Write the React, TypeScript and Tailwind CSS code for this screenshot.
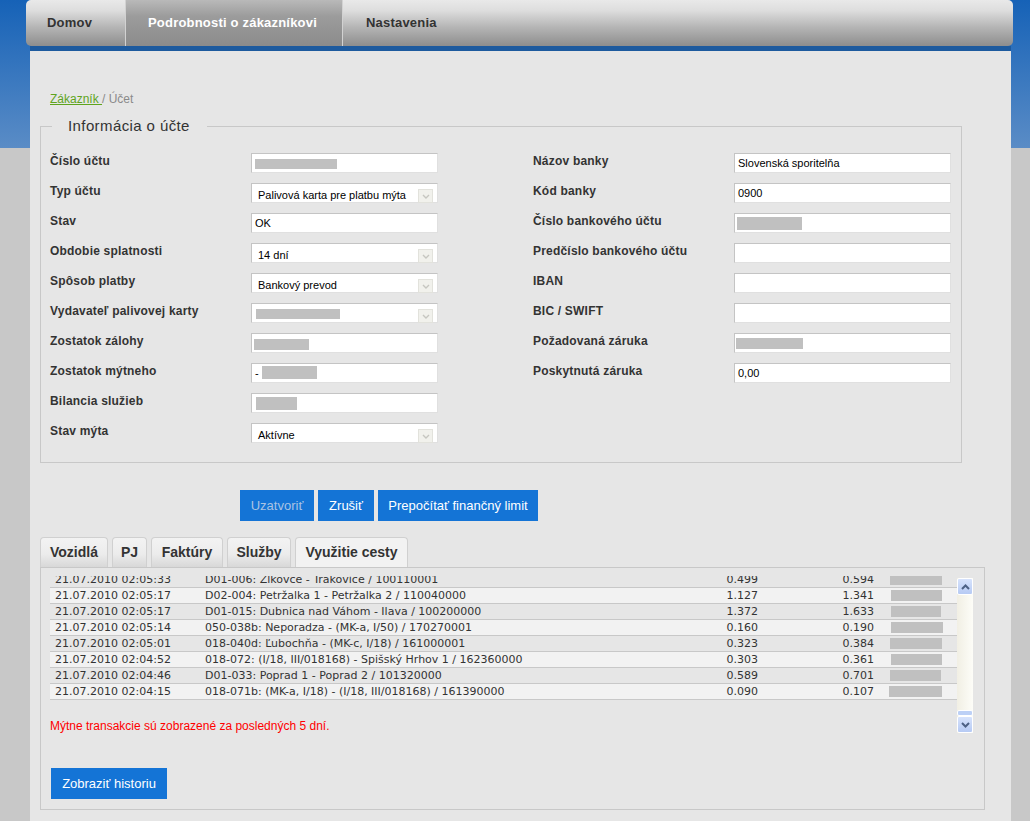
import type { ReactNode } from 'react'

// ── Data ────────────────────────────────────────────────────────────────────
const leftFields: { label: string; kind: 'input' | 'select'; value?: string; mask?: { l: number; w: number; t: number; h: number }; dash?: boolean }[] = [
  { label: 'Číslo účtu',               kind: 'input',  mask: { l: 3, w: 82, t: 6, h: 10 } },
  { label: 'Typ účtu',                 kind: 'select', value: 'Palivová karta pre platbu mýta' },
  { label: 'Stav',                     kind: 'input',  value: 'OK' },
  { label: 'Obdobie splatnosti',       kind: 'select', value: '14 dní' },
  { label: 'Spôsob platby',            kind: 'select', value: 'Bankový prevod' },
  { label: 'Vydavateľ palivovej karty', kind: 'select', mask: { l: 4, w: 84, t: 6, h: 10 } },
  { label: 'Zostatok zálohy',          kind: 'input',  mask: { l: 2, w: 55, t: 6, h: 11 } },
  { label: 'Zostatok mýtneho',         kind: 'input',  mask: { l: 10, w: 55, t: 3, h: 13 }, dash: true },
  { label: 'Bilancia služieb',         kind: 'input',  mask: { l: 4, w: 41, t: 4, h: 13 } },
  { label: 'Stav mýta',                kind: 'select', value: 'Aktívne' },
]

const rightFields: { label: string; value?: string; mask?: { l: number; w: number; t: number; h: number } }[] = [
  { label: 'Názov banky',              value: 'Slovenská sporitelňa' },
  { label: 'Kód banky',                value: '0900' },
  { label: 'Číslo bankového účtu',     mask: { l: 2, w: 65, t: 4, h: 13 } },
  { label: 'Predčíslo bankového účtu' },
  { label: 'IBAN' },
  { label: 'BIC / SWIFT' },
  { label: 'Požadovaná záruka',        mask: { l: 1, w: 67, t: 5, h: 11 } },
  { label: 'Poskytnutá záruka',        value: '0,00' },
]

const trips = [
  { date: '21.07.2010 02:05:33', route: 'D01-006: Žlkovce - Trakovice / 100110001',                 a: '0.499', b: '0.594', bl: 0,  bw: 52 },
  { date: '21.07.2010 02:05:17', route: 'D02-004: Petržalka 1 - Petržalka 2 / 110040000',           a: '1.127', b: '1.341', bl: 1,  bw: 51 },
  { date: '21.07.2010 02:05:17', route: 'D01-015: Dubnica nad Váhom - Ilava / 100200000',           a: '1.372', b: '1.633', bl: 1,  bw: 50 },
  { date: '21.07.2010 02:05:14', route: '050-038b: Neporadza - (MK-a, I/50) / 170270001',           a: '0.160', b: '0.190', bl: 1,  bw: 52 },
  { date: '21.07.2010 02:05:01', route: '018-040d: Ľubochňa - (MK-c, I/18) / 161000001',            a: '0.323', b: '0.384', bl: 0,  bw: 52 },
  { date: '21.07.2010 02:04:52', route: '018-072: (I/18, III/018168) - Spišský Hrhov 1 / 162360000', a: '0.303', b: '0.361', bl: 1,  bw: 51 },
  { date: '21.07.2010 02:04:46', route: 'D01-033: Poprad 1 - Poprad 2 / 101320000',                 a: '0.589', b: '0.701', bl: 0,  bw: 51 },
  { date: '21.07.2010 02:04:15', route: '018-071b: (MK-a, I/18) - (I/18, III/018168) / 161390000',  a: '0.090', b: '0.107', bl: -1, bw: 53 },
]

const tabs = [
  { label: 'Vozidlá',        w: 'w-[68px]' },
  { label: 'PJ',             w: 'w-[35px]' },
  { label: 'Faktúry',        w: 'w-[72px]' },
  { label: 'Služby',         w: 'w-[64px]' },
  { label: 'Využitie cesty', w: 'w-[113px]', active: true },
]

// ── Small pieces ────────────────────────────────────────────────────────────
function Mask({ m }: { m: { l: number; w: number; t: number; h: number } }) {
  return (
    <span
      className="absolute bg-[#c0c0c0]"
      style={{ left: m.l, top: m.t - 1, width: m.w, height: m.h }}
    />
  )
}

function Label({ children }: { children: ReactNode }) {
  return (
    <div className="w-[201px] shrink-0 mt-[1px] text-[12px] leading-[14px] font-bold tracking-[0.2px] text-[#333]">
      {children}
    </div>
  )
}

function SelectArrow() {
  return (
    <span className="absolute right-[4px] top-[5px] w-[15px] h-[14px] bg-[#f1f1ec] border border-[#e2e2dc] flex items-center justify-center">
      <svg viewBox="0 0 8 5" className="w-[8px] h-[5px]">
        <polyline points="1,1 4,4 7,1" fill="none" stroke="#c6c6c0" strokeWidth="1.4" />
      </svg>
    </span>
  )
}

function Chevron({ up }: { up?: boolean }) {
  return (
    <svg viewBox="0 0 9 6" className="w-[9px] h-[6px]">
      <polyline points={up ? '1,5 4.5,1.5 8,5' : '1,1 4.5,4.5 8,1'} fill="none" stroke="#4d6185" strokeWidth="2" />
    </svg>
  )
}

export default function App() {
  return (
    <div className="w-[1030px] h-[821px] overflow-hidden font-['Liberation_Sans',Arial,sans-serif] bg-[linear-gradient(to_bottom,#1662b7_0px,#5a8cc6_148px,#c8c8c8_148px,#c8c8c8_100%)]">

      {/* ══════════════════════ TOP NAV ═════════════════════════════════════ */}
      <nav className="ml-[26px] w-[987px] h-[46px] rounded-[5px] flex bg-[linear-gradient(to_bottom,#e9e9e9_0%,#dedede_22%,#b4b4b4_60%,#8d8d8d_100%)] text-[13px] font-bold tracking-[0.2px]">
        <div className="w-[99px] pl-[21px] flex items-center text-[#333]">Domov</div>
        <div className="w-[218px] pl-[22px] flex items-center text-white border-x border-[#d2d2d2] bg-[linear-gradient(to_bottom,#b9b9b9_0%,#9c9c9c_35%,#8b8b8b_100%)]">
          Podrobnosti o zákazníkovi
        </div>
        <div className="pl-[23px] flex items-center text-[#333]">Nastavenia</div>
      </nav>

      {/* ══════════════════════ CONTENT ═════════════════════════════════════ */}
      <main className="ml-[30px] w-[981px]">
        <div className="h-[5px] bg-[#1d5a9e]" />

        <div className="h-[770px] bg-[#e6e6e6] pt-[40px]">

          {/* Breadcrumb */}
          <div className="pl-[20px] text-[12px] leading-[16px] text-[#8a8a8a]">
            <span className="text-[#5fa41e] underline">Zákazník </span>/ Účet
          </div>

          {/* ── Account fieldset ───────────────────────────────────────────── */}
          <fieldset className="mt-[10px] ml-[10px] w-[922px] border border-[#c8c8c8] pb-[19px]">
            <legend className="ml-[11px] pl-[16px] pr-[17px] text-[15px] leading-[18px] tracking-[0.4px] text-[#333]">
              Informácia o účte
            </legend>

            <div className="pt-[18px] pl-[9px] flex">
              {/* Left column */}
              <div className="flex flex-col gap-[10px]">
                {leftFields.map(f => (
                  <div key={f.label} className="flex h-[20px]">
                    <Label>{f.label}</Label>
                    <div className="relative w-[187px] h-[20px] bg-white border border-[#c4c4c4] border-b-[#e0e0e0] border-r-[#e0e0e0] text-[11px] text-black">
                      {f.kind === 'select' ? (
                        <>
                          <span className="absolute left-[6px] top-[5px] leading-[13px]">{f.value}</span>
                          <SelectArrow />
                        </>
                      ) : (
                        <span className="absolute left-[3px] top-[3px] leading-[13px]">{f.value}</span>
                      )}
                      {f.dash && <span className="absolute left-[3px] top-[3px] leading-[13px]">-</span>}
                      {f.mask && <Mask m={f.mask} />}
                    </div>
                  </div>
                ))}
              </div>

              {/* Right column */}
              <div className="ml-[95px] flex flex-col gap-[10px]">
                {rightFields.map(f => (
                  <div key={f.label} className="flex h-[20px]">
                    <Label>{f.label}</Label>
                    <div className="relative w-[217px] h-[20px] bg-white border border-[#c4c4c4] border-b-[#e0e0e0] border-r-[#e0e0e0] text-[11px] text-black">
                      {f.value && <span className="absolute left-[3px] top-[3px] leading-[13px]">{f.value}</span>}
                      {f.mask && <Mask m={f.mask} />}
                    </div>
                  </div>
                ))}
              </div>
            </div>
          </fieldset>

          {/* ── Action buttons ─────────────────────────────────────────────── */}
          <div className="mt-[27px] pl-[210px] flex gap-[4px] text-[13px]">
            <button className="h-[31px] w-[74px] bg-[#1474d6] text-[#a9c3e3]">Uzatvoriť</button>
            <button className="h-[31px] w-[56px] bg-[#1474d6] text-white">Zrušiť</button>
            <button className="h-[31px] w-[160px] bg-[#1474d6] text-white">Prepočítať finančný limit</button>
          </div>

          {/* ── Tabs ───────────────────────────────────────────────────────── */}
          <div className="mt-[16px] pl-[10px] flex gap-[4px] items-end">
            {tabs.map(t => (
              <div
                key={t.label}
                className={`${t.w} h-[30px] rounded-t-[4px] border border-b-0 border-[#d0d0d0] flex items-center justify-center text-[14px] font-bold text-[#333] ${
                  t.active
                    ? 'bg-[#f2f2f2]'
                    : 'bg-[linear-gradient(to_bottom,#f3f3f3_0%,#ececec_55%,#d8d8d8_100%)]'
                }`}
              >
                {t.label}
              </div>
            ))}
          </div>

          {/* ── Tab panel ──────────────────────────────────────────────────── */}
          <section className="ml-[10px] w-[945px] border border-[#c8c8c8] pt-[8px] pl-[9px] pb-[10px]">
            <div className="flex">
              {/* Scrolled content (scrolled to bottom) */}
              <div className="w-[907px] h-[158px] overflow-hidden flex flex-col justify-end">
                <div className="shrink-0 font-['DejaVu_Sans',Verdana,sans-serif] text-[11px] text-[#333]">
                  {trips.map((r, i) => (
                    <div
                      key={i}
                      className={`h-[16px] flex items-center border-b border-[#c8c8c8] ${i % 2 ? 'bg-[#f2f2f2]' : 'bg-[#e6e6e6]'}`}
                    >
                      <span className="w-[155px] pl-[5px] shrink-0 leading-[15px]">{r.date}</span>
                      <span className="w-[453px] shrink-0 leading-[15px] whitespace-nowrap">{r.route}</span>
                      <span className="w-[100px] shrink-0 text-right leading-[15px]">{r.a}</span>
                      <span className="w-[116px] shrink-0 text-right leading-[15px]">{r.b}</span>
                      <span className="pl-[16px] shrink-0 flex">
                        <span className="h-[11px] bg-[#c0c0c0]" style={{ marginLeft: r.bl, width: r.bw }} />
                      </span>
                    </div>
                  ))}
                </div>
                <p className="shrink-0 mt-[18px] text-[12px] leading-[16px] text-[#ff0000]">
                  Mýtne transakcie sú zobrazené za posledných 5 dní.
                </p>
              </div>

              {/* XP-style scrollbar */}
              <div className="mt-[2px] w-[16px] h-[155px] flex flex-col bg-[linear-gradient(to_right,#f1efe4,#fdfdf8)]">
                <div className="h-[17px] rounded-[2px] border border-white bg-[linear-gradient(to_bottom,#d7e3fc,#b6caf4)] flex items-center justify-center">
                  <Chevron up />
                </div>
                <div className="flex-1" />
                <div className="h-[6px] rounded-[2px] border border-white bg-[#bcd0f6]" />
                <div className="h-[17px] rounded-[2px] border border-white bg-[linear-gradient(to_bottom,#d7e3fc,#b6caf4)] flex items-center justify-center">
                  <Chevron />
                </div>
              </div>
            </div>

            <button className="mt-[34px] ml-[1px] h-[31px] w-[116px] bg-[#1474d6] text-white text-[13px]">
              Zobraziť historiu
            </button>
          </section>

        </div>
      </main>
    </div>
  )
}
